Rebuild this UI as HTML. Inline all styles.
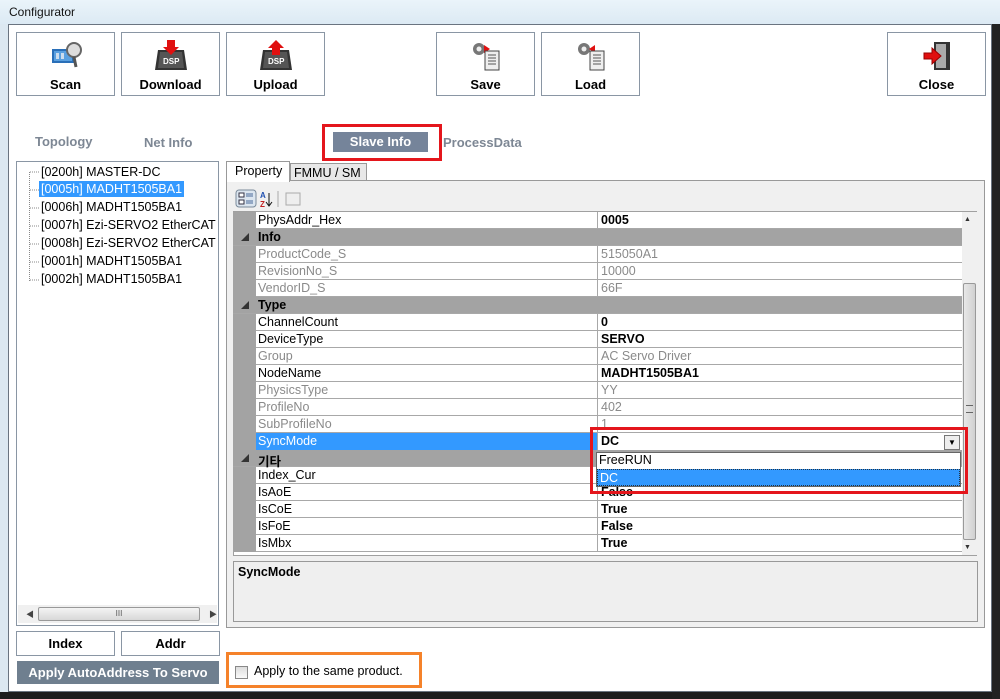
<!DOCTYPE html>
<html><head><meta charset="utf-8"><style>
*{box-sizing:border-box;margin:0;padding:0}
body{width:1000px;height:699px;overflow:hidden;background:#2a2a2a;font-family:"Liberation Sans","Noto Sans CJK KR",sans-serif;font-size:12.5px;position:relative}
.a{position:absolute}
.btn{position:absolute;background:#fff;border:1px solid #8a96a4;font-weight:bold;font-size:13px;text-align:center}
.btn .l{position:absolute;left:0;right:0;bottom:3px}
.tab{position:absolute;font-weight:bold;font-size:13px;color:#7d8794}
.tree div{position:absolute;left:40px;height:16px;line-height:16px;padding:0 2px;white-space:nowrap;font-size:12.5px}
.row{position:absolute;left:233px;width:729px;height:17px;border-bottom:1px solid #a8a8a8}
.row .g{position:absolute;left:0;top:0;width:23px;height:17px;background:#a3a3a3}
.row .n{position:absolute;left:25px;top:1px;white-space:nowrap}
.row .v{position:absolute;left:364px;top:0;height:17px;border-left:1px solid #a8a8a8;padding-left:3px;padding-top:1px;white-space:nowrap}
.row.c{background:#a3a3a3}
.row.c .n{font-weight:bold;left:25px}
.row.c .t{position:absolute;left:8px;top:3px;font-size:8px;color:#333}
.gr{color:#8a8a8a}
.b{font-weight:bold}
</style></head><body>
<div class="a" style="left:0;top:0;width:1000px;height:26px;background:linear-gradient(#eaf4fa,#dbe9f3);"></div>
<div class="a" style="left:9px;top:5px;font-size:12px;color:#111">Configurator</div>
<div class="a" style="left:0;top:24px;width:8px;height:675px;background:#dce8f1"></div>
<div class="a" style="left:8px;top:24px;width:984px;height:668px;background:#fff;border:1px solid #6a7480"></div>
<div class="a" style="left:0;top:692px;width:1000px;height:7px;background:#1d1d1d"></div>
<div class="a" style="left:992px;top:24px;width:8px;height:675px;background:#222"></div>

<div class="btn" style="left:16px;top:32px;width:99px;height:64px">
<svg class="a" style="left:33px;top:8px" width="34" height="30"><rect x="2" y="8" width="22" height="14" fill="#2a6fb8"/><rect x="4" y="10" width="18" height="10" fill="#5aa0e0"/><rect x="6" y="12" width="3" height="6" fill="#cde"/><rect x="11" y="12" width="3" height="6" fill="#cde"/><circle cx="24" cy="9" r="7" fill="#ddd" stroke="#666" stroke-width="2"/><line x1="24" y1="16" x2="26" y2="26" stroke="#555" stroke-width="3"/></svg>
<span class="l">Scan</span></div>
<div class="btn" style="left:121px;top:32px;width:99px;height:64px">
<svg class="a" style="left:32px;top:7px" width="34" height="32"><path d="M4 10h26l3 20H1z" fill="#333"/><path d="M6 12h22l2 16H4z" fill="#555"/><text x="9" y="24" font-size="8" fill="#fff" font-family="Liberation Sans" font-weight="bold">DSP</text><path d="M13 0h8v7h4l-8 8-8-8h4z" fill="#e01010"/></svg>
<span class="l">Download</span></div>
<div class="btn" style="left:226px;top:32px;width:99px;height:64px">
<svg class="a" style="left:32px;top:7px" width="34" height="32"><path d="M4 10h26l3 20H1z" fill="#333"/><path d="M6 12h22l2 16H4z" fill="#555"/><text x="9" y="24" font-size="8" fill="#fff" font-family="Liberation Sans" font-weight="bold">DSP</text><path d="M17 0l8 8h-4v7h-8v-7h-4z" fill="#e01010"/></svg>
<span class="l">Upload</span></div>
<div class="btn" style="left:436px;top:32px;width:99px;height:64px">
<svg class="a" style="left:34px;top:8px" width="32" height="32"><circle cx="8" cy="8" r="6" fill="#777"/><circle cx="8" cy="8" r="2.5" fill="#eee"/><path d="M13 4l6 4-6 4z" fill="#e01010"/><rect x="14" y="10" width="14" height="19" fill="#eee" stroke="#444"/><path d="M17 14h8M17 17h8M17 20h8M17 23h8" stroke="#555"/></svg>
<span class="l">Save</span></div>
<div class="btn" style="left:541px;top:32px;width:99px;height:64px">
<svg class="a" style="left:34px;top:8px" width="32" height="32"><circle cx="8" cy="8" r="6" fill="#777"/><circle cx="8" cy="8" r="2.5" fill="#eee"/><path d="M19 4l-6 4 6 4z" fill="#e01010"/><rect x="14" y="10" width="14" height="19" fill="#eee" stroke="#444"/><path d="M17 14h8M17 17h8M17 20h8M17 23h8" stroke="#555"/></svg>
<span class="l">Load</span></div>
<div class="btn" style="left:887px;top:32px;width:99px;height:64px">
<svg class="a" style="left:34px;top:8px" width="32" height="32"><path d="M12 1h16v28H12z" fill="#333"/><path d="M14 3h10v24H14z" fill="#aaa"/><path d="M2 12h8V7l9 8-9 8v-5H2z" fill="#e01010" stroke="#900"/></svg>
<span class="l">Close</span></div>

<div class="tab" style="left:35px;top:134px">Topology</div>
<div class="tab" style="left:144px;top:135px">Net Info</div>
<div class="a" style="left:322px;top:124px;width:120px;height:37px;border:3px solid #e4161c"></div>
<div class="a" style="left:333px;top:132px;width:95px;height:20px;background:#75849a;color:#fff;font-weight:bold;font-size:13px;text-align:center;line-height:20px">Slave Info</div>
<div class="tab" style="left:443px;top:135px">ProcessData</div>

<div class="a tree" style="left:16px;top:161px;width:203px;height:465px;border:1px solid #8a96a4;background:#fff">
<svg class="a" style="left:12px;top:0" width="20" height="120"><path d="M0.5 10V119M1 10h10M1 28h10M1 46h10M1 64h10M1 82h10M1 100h10M1 118h10" stroke="#888" stroke-dasharray="1 1"/></svg>
<div style="top:2px;left:22px">[0200h] MASTER-DC</div>
<div style="top:19px;left:22px;background:#3399ff;color:#fff">[0005h] MADHT1505BA1</div>
<div style="top:37px;left:22px">[0006h] MADHT1505BA1</div>
<div style="top:55px;left:22px">[0007h] Ezi-SERVO2 EtherCAT</div>
<div style="top:73px;left:22px">[0008h] Ezi-SERVO2 EtherCAT</div>
<div style="top:91px;left:22px">[0001h] MADHT1505BA1</div>
<div style="top:109px;left:22px">[0002h] MADHT1505BA1</div>
<div class="a" style="left:1px;top:443px;width:199px;height:18px;background:#f0f0f0"></div>
<div class="a" style="left:21px;top:445px;width:162px;height:14px;border:1px solid #999;border-radius:2px;background:linear-gradient(#f4f4f4,#d8d8d8);font-size:8px;text-align:center;line-height:12px;color:#555">III</div>
<div class="a" style="left:7px;top:445px;font-size:8px;color:#444">◀</div>
<div class="a" style="left:190px;top:445px;font-size:8px;color:#444">▶</div>
</div>
<div class="btn" style="left:16px;top:631px;width:99px;height:25px;line-height:23px">Index</div>
<div class="btn" style="left:121px;top:631px;width:99px;height:25px;line-height:23px">Addr</div>
<div class="a" style="left:17px;top:661px;width:202px;height:23px;background:#6f7f8f;color:#fff;font-weight:bold;font-size:13px;text-align:center;line-height:23px">Apply AutoAddress To Servo</div>

<div class="a" style="left:226px;top:180px;width:759px;height:448px;border:1px solid #999;background:#f0f0f0"></div>
<div class="a" style="left:226px;top:161px;width:64px;height:21px;border:1px solid #999;border-bottom:none;background:#fff;padding:2px 0 0 8px">Property</div>
<div class="a" style="left:290px;top:163px;width:77px;height:18px;border:1px solid #999;background:#e8e8e8;padding:2px 0 0 3px">FMMU / SM</div>
<div class="a" style="left:234px;top:188px;width:743px;height:23px;background:#f0f0f0"></div>
<svg class="a" style="left:235px;top:189px" width="75" height="20"><rect x="1" y="1" width="20" height="17" rx="3" fill="#dce6f0" stroke="#7a8a9a"/><rect x="4" y="4" width="5" height="4" fill="#fff" stroke="#334"/><rect x="4" y="11" width="5" height="4" fill="#fff" stroke="#334"/><path d="M11 5h7M11 7h7M11 12h7M11 14h7" stroke="#4a6a9a"/><text x="25" y="9" font-size="8" fill="#2050b0" font-weight="bold" font-family="Liberation Sans">A</text><text x="25" y="18" font-size="8" fill="#c02020" font-weight="bold" font-family="Liberation Sans">Z</text><path d="M34 4v12M31 13l3 4 3-4" stroke="#111" fill="none"/><path d="M43 2v16" stroke="#aaa"/><rect x="51" y="4" width="14" height="12" fill="#eee" stroke="#aaa"/></svg>
<div class="a" style="left:233px;top:211px;width:744px;height:345px;background:#fff;border:1px solid #a0a0a0"></div>

<div class="row" style="top:212px"><div class="g"></div><span class="n">PhysAddr_Hex</span><span class="v b">0005</span></div>
<div class="row c" style="top:229px"><span class="t">◢</span><span class="n">Info</span></div>
<div class="row" style="top:246px"><div class="g"></div><span class="n gr">ProductCode_S</span><span class="v gr">515050A1</span></div>
<div class="row" style="top:263px"><div class="g"></div><span class="n gr">RevisionNo_S</span><span class="v gr">10000</span></div>
<div class="row" style="top:280px"><div class="g"></div><span class="n gr">VendorID_S</span><span class="v gr">66F</span></div>
<div class="row c" style="top:297px"><span class="t">◢</span><span class="n">Type</span></div>
<div class="row" style="top:314px"><div class="g"></div><span class="n">ChannelCount</span><span class="v b">0</span></div>
<div class="row" style="top:331px"><div class="g"></div><span class="n">DeviceType</span><span class="v b">SERVO</span></div>
<div class="row" style="top:348px"><div class="g"></div><span class="n gr">Group</span><span class="v gr">AC Servo Driver</span></div>
<div class="row" style="top:365px"><div class="g"></div><span class="n">NodeName</span><span class="v b">MADHT1505BA1</span></div>
<div class="row" style="top:382px"><div class="g"></div><span class="n gr">PhysicsType</span><span class="v gr">YY</span></div>
<div class="row" style="top:399px"><div class="g"></div><span class="n gr">ProfileNo</span><span class="v gr">402</span></div>
<div class="row" style="top:416px"><div class="g"></div><span class="n gr">SubProfileNo</span><span class="v gr">1</span></div>
<div class="row" style="top:433px"><div class="g"></div><div class="a" style="left:23px;top:0;width:341px;height:17px;background:#3399ff"></div><span class="n" style="color:#fff">SyncMode</span><span class="v b" style="width:365px;background:#fff">DC</span></div>
<div class="row c" style="top:450px"><span class="t">◢</span><span class="n">기타</span></div>
<div class="row" style="top:467px"><div class="g"></div><span class="n">Index_Cur</span><span class="v b"></span></div>
<div class="row" style="top:484px"><div class="g"></div><span class="n">IsAoE</span><span class="v b">False</span></div>
<div class="row" style="top:501px"><div class="g"></div><span class="n">IsCoE</span><span class="v b">True</span></div>
<div class="row" style="top:518px"><div class="g"></div><span class="n">IsFoE</span><span class="v b">False</span></div>
<div class="row" style="top:535px"><div class="g"></div><span class="n">IsMbx</span><span class="v b">True</span></div>

<div class="a" style="left:962px;top:212px;width:15px;height:343px;background:#f0f0f0"></div>
<div class="a" style="left:964px;top:216px;font-size:7px;color:#333">▲</div>
<div class="a" style="left:964px;top:544px;font-size:7px;color:#333">▼</div>
<div class="a" style="left:963px;top:283px;width:13px;height:257px;border:1px solid #999;border-radius:2px;background:linear-gradient(90deg,#e8e8e8,#d0d0d0)"></div>
<div class="a" style="left:966px;top:405px;width:7px;height:8px;border-top:1px solid #666;border-bottom:1px solid #666"></div>

<div class="a" style="left:944px;top:435px;width:16px;height:15px;border:1px solid #777;background:#eee;font-size:8px;text-align:center;line-height:14px">▼</div>
<div class="a" style="left:596px;top:452px;width:365px;height:35px;border:1px solid #666;background:#fff"></div>
<div class="a" style="left:599px;top:453px">FreeRUN</div>
<div class="a" style="left:597px;top:469px;width:363px;height:17px;background:#3399ff;color:#fff;padding:1px 0 0 2px;border:1px dotted #234">DC</div>
<div class="a" style="left:590px;top:427px;width:378px;height:67px;border:3px solid #e4161c"></div>

<div class="a" style="left:233px;top:561px;width:745px;height:61px;border:1px solid #999;background:#efefef;font-weight:bold;padding:3px 4px">SyncMode</div>

<div class="a" style="left:226px;top:652px;width:196px;height:36px;border:3px solid #f5822a"></div>
<div class="a" style="left:235px;top:666px;width:13px;height:13px;border:1px solid #888;background:linear-gradient(#ddd,#fafafa)"></div>
<div class="a" style="left:254px;top:664px">Apply to the same product.</div>
</body></html>
